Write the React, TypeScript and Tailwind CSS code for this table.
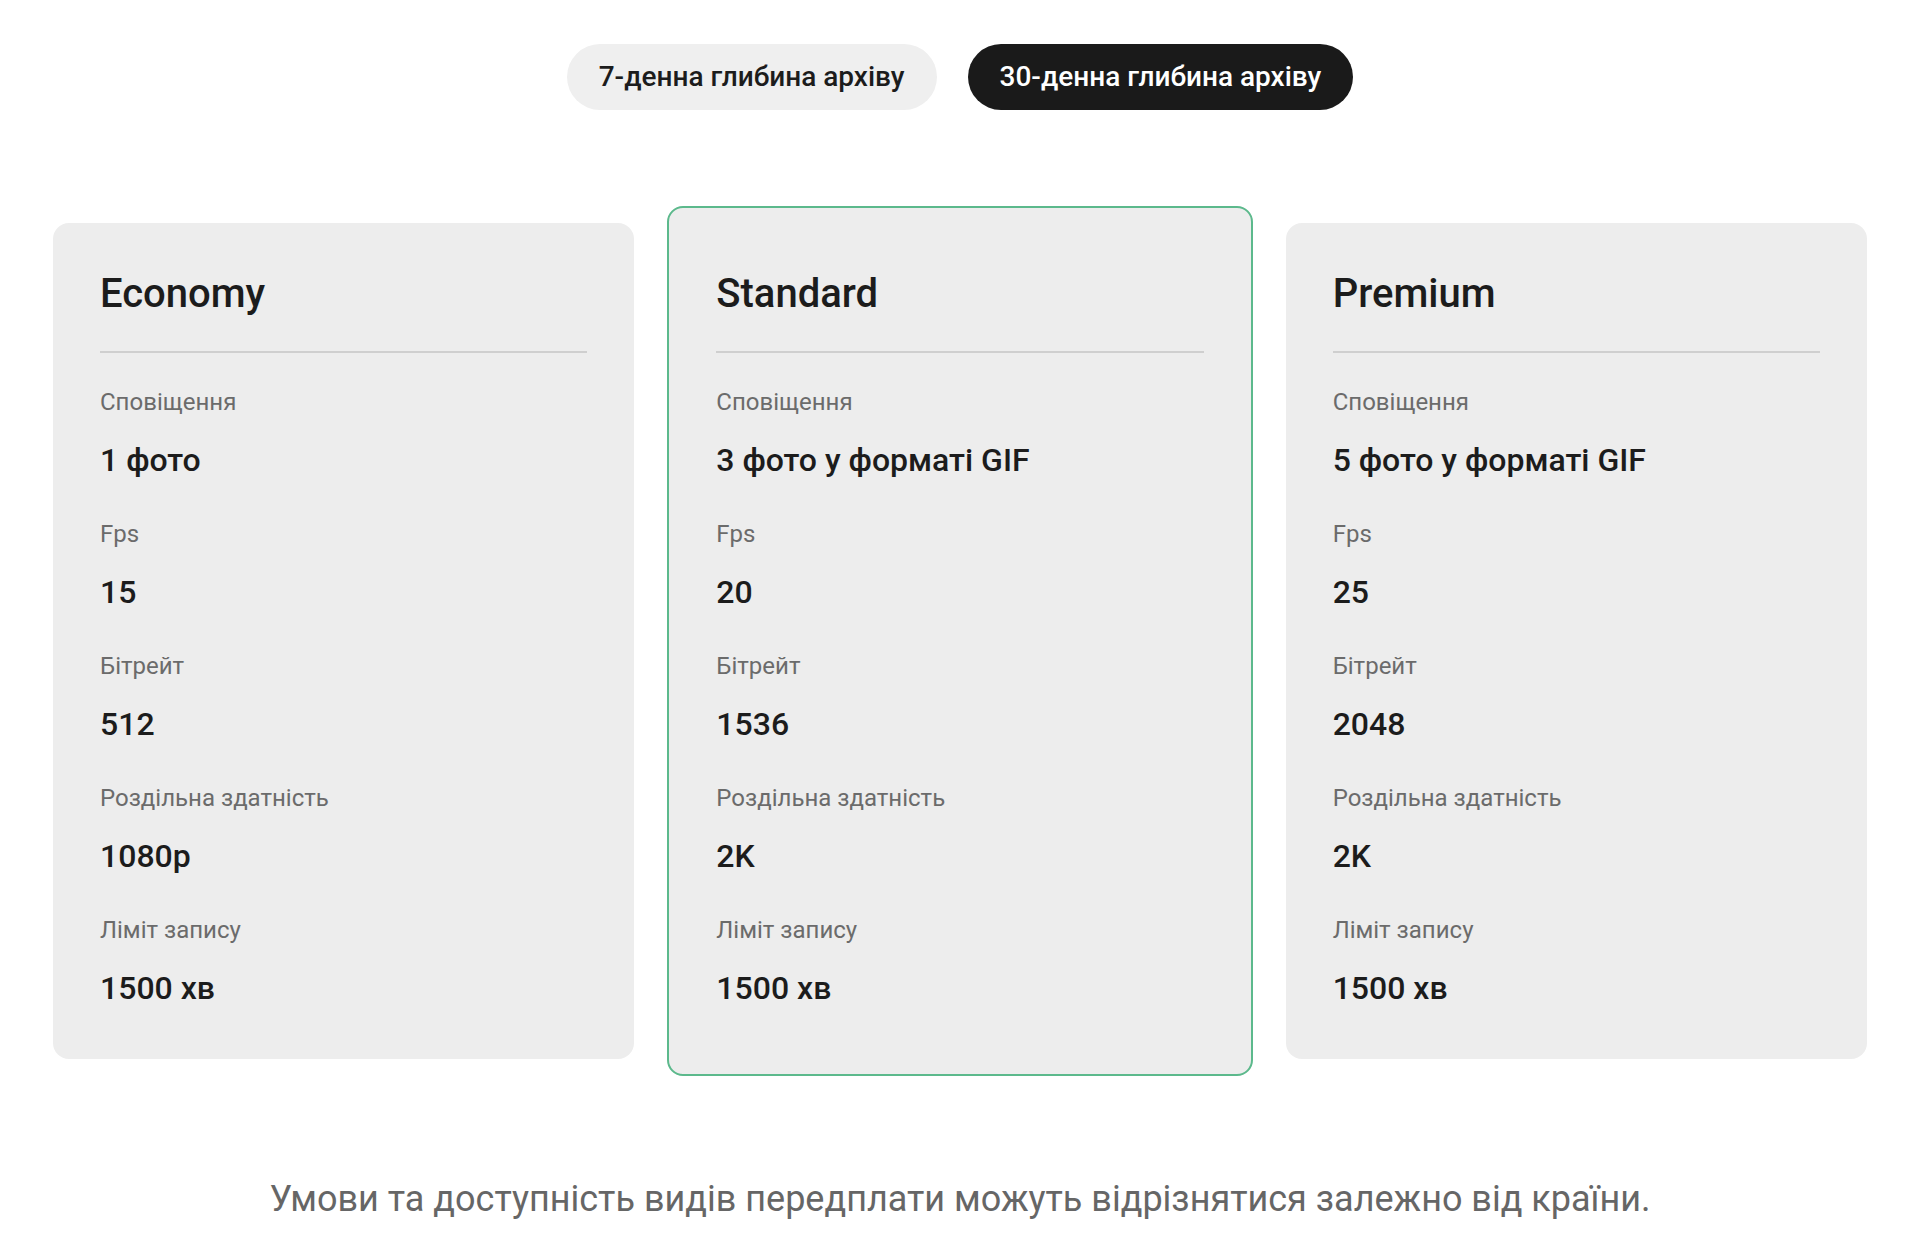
const PLANS = [
  {
    name: 'Economy',
    highlight: false,
    rows: [
      ['Сповіщення', '1 фото'],
      ['Fps', '15'],
      ['Бітрейт', '512'],
      ['Роздільна здатність', '1080p'],
      ['Ліміт запису', '1500 хв'],
    ],
  },
  {
    name: 'Standard',
    highlight: true,
    rows: [
      ['Сповіщення', '3 фото у форматі GIF'],
      ['Fps', '20'],
      ['Бітрейт', '1536'],
      ['Роздільна здатність', '2K'],
      ['Ліміт запису', '1500 хв'],
    ],
  },
  {
    name: 'Premium',
    highlight: false,
    rows: [
      ['Сповіщення', '5 фото у форматі GIF'],
      ['Fps', '25'],
      ['Бітрейт', '2048'],
      ['Роздільна здатність', '2K'],
      ['Ліміт запису', '1500 хв'],
    ],
  },
]

function PlanCard({ plan }: { plan: (typeof PLANS)[number] }) {
  return (
    <div
      className={`flex-1 rounded-2xl bg-[#ededed] px-[47px] ${
        plan.highlight
          ? 'border-2 border-[#5cb98c] pt-[64px] pb-[68px]'
          : 'pt-[49px] pb-[53px]'
      }`}
    >
      <h3 className="text-[40px] font-medium leading-[44px] text-[#1c1c1c]">{plan.name}</h3>
      <div className="mt-[35px] h-[2px] bg-[#cfcfcf]" />
      <dl className="mt-[35px]">
        {plan.rows.map(([label, value], i) => (
          <div key={label} className={i > 0 ? 'mt-[42px]' : ''}>
            <dt className="text-[24px] leading-[28px] text-[#6b6b6b]">{label}</dt>
            <dd className="mt-[26px] text-[32px] font-medium leading-[36px] text-[#1c1c1c]">{value}</dd>
          </div>
        ))}
      </dl>
    </div>
  )
}

export default function App() {
  return (
    <div className="min-h-screen bg-white font-['Roboto',sans-serif]">
      {/* archive depth toggle */}
      <div className="flex justify-center gap-[31px] pt-[44px]">
        <button className="h-[66px] rounded-full bg-[#efefef] px-8 text-[28px] font-medium text-[#1c1c1c]">
          7-денна глибина архіву
        </button>
        <button className="h-[66px] rounded-full bg-[#1a1a1a] px-8 text-[28px] font-medium text-white">
          30-денна глибина архіву
        </button>
      </div>

      {/* plans */}
      <div className="mt-[96px] flex items-center gap-[33px] px-[53px]">
        {PLANS.map((p) => (
          <PlanCard key={p.name} plan={p} />
        ))}
      </div>

      <p className="mt-[101px] text-center text-[36px] leading-[44px] text-[#666666]">
        Умови та доступність видів передплати можуть відрізнятися залежно від країни.
      </p>
    </div>
  )
}
